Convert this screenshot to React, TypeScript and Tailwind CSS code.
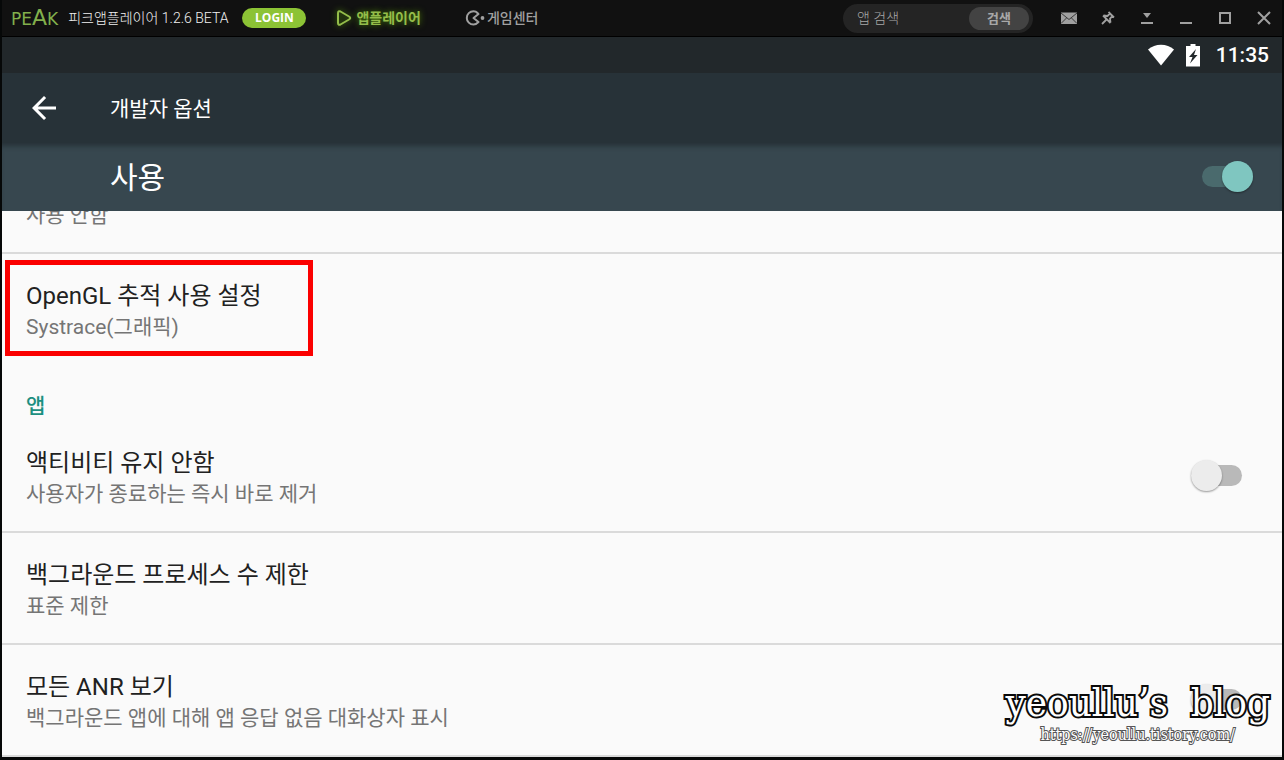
import { useId, useState } from "react";
import type { ReactNode } from "react";

const ANDROID_FONT = "font-['Roboto','Noto_Sans_CJK_KR',sans-serif]";

/** Material switch. Thumb is the ::after, track is the ::before. */
function Switch({ id, label, defaultOn = false }: { id: string; label?: string; defaultOn?: boolean }) {
  const [on, setOn] = useState(defaultOn);
  return (
    <input
      id={id}
      type="checkbox"
      role="switch"
      aria-label={label}
      checked={on}
      onChange={(e) => setOn(e.target.checked)}
      className="relative h-8 w-[51px] shrink-0 cursor-pointer appearance-none before:absolute before:inset-x-0 before:top-[5px] before:h-[21px] before:rounded-full before:bg-[#b9b9b9] after:absolute after:left-0 after:top-0 after:size-[31px] after:rounded-full after:bg-[#ececec] after:shadow-[0_1px_2px_rgba(0,0,0,0.4)] checked:before:bg-[#4a6a6d] checked:after:left-5 checked:after:bg-[#7fc6c0]"
    />
  );
}

interface PreferenceProps {
  title?: string;
  summary: string;
  toggle?: boolean;
  divider?: boolean;
  highlighted?: boolean;
}

function Preference({ title, summary, toggle = false, divider = true, highlighted = false }: PreferenceProps) {
  const id = useId();
  return (
    <li
      className={
        divider
          ? "relative flex shrink-0 items-center justify-between border-b-2 border-[#dadada] pl-6 pr-10"
          : "relative flex shrink-0 items-center justify-between pl-6 pr-10"
      }
    >
      <label htmlFor={toggle ? id : undefined} className="block pb-[22px] pt-[26px]">
        {title ? <span className="block text-[24px] leading-[32px] text-[#212121]">{title}</span> : null}
        <span className="block text-[21px] leading-[30px] text-[#757575]">{summary}</span>
      </label>
      {toggle ? <Switch id={id} /> : null}
      {highlighted ? (
        <span aria-hidden className="pointer-events-none absolute left-[3px] top-[6px] h-24 w-[308px] border-[5px] border-[#fb0000]" />
      ) : null}
    </li>
  );
}

function WindowButton({ label, children }: { label: string; children: ReactNode }) {
  return (
    <button type="button" aria-label={label} className="flex h-9 w-9 items-center justify-center text-[#a0a0a0] hover:text-white">
      <svg width="16" height="16" viewBox="0 0 16 16" fill="none" stroke="currentColor" strokeWidth="2" aria-hidden>
        {children}
      </svg>
    </button>
  );
}

function TitleBar() {
  return (
    <header className="flex h-[37px] shrink-0 items-center justify-between border-b border-black bg-[#111111] font-['Roboto','Noto_Sans_CJK_KR',sans-serif]">
      <div className="flex items-center pl-[9px]">
        <span className="flex items-baseline font-['DejaVu_Sans',sans-serif] text-[17px] leading-[20px] text-[#82b04c]">
          PE<span className="text-[22px]">A</span>K
        </span>
        <span className="ml-[10px] whitespace-nowrap text-[14px] font-light text-[#f2f2f2]">피크앱플레이어 1.2.6 BETA</span>
        <button type="button" className="ml-[14px] h-5 w-16 rounded-full bg-[#8cc335] text-center font-['Open_Sans',sans-serif] text-[12px] font-bold leading-[20px] text-white">
          LOGIN
        </button>
        <nav aria-label="메뉴" className="ml-[30px] flex items-center gap-11 text-[14px]">
          <a href="#player" aria-current="page" className="flex items-center gap-1 font-bold text-[#94bd4a] [text-shadow:0_0_6px_#4f8a08]">
            <svg width="16" height="18" viewBox="0 0 16 18" fill="none" stroke="currentColor" strokeWidth="2" strokeLinejoin="round" className="drop-shadow-[0_0_3px_#4f8a08]" aria-hidden>
              <path d="M2 4.200Q2 1.500 4.500 2.500L13 7.500Q15.500 9 13 10.500L4.500 15.500Q2 16.500 2 14Z" />
            </svg>
            앱플레이어
          </a>
          <a href="#games" className="flex items-center gap-[2px] font-medium text-[#a0a0a0]">
            <svg width="20" height="18" viewBox="0 0 20 18" fill="none" stroke="currentColor" strokeWidth="2" strokeLinejoin="round" strokeLinecap="round" aria-hidden>
              <path d="M12.500 4Q11 2.200 8.500 2.200A6.700 6.700 0 1 0 8.500 15.600Q11 15.600 13.500 13L8.500 9L13.500 5Z" />
              <circle cx="17.500" cy="9" r="1.900" fill="currentColor" stroke="none" />
            </svg>
            게임센터
          </a>
        </nav>
      </div>

      <div className="flex items-center gap-[18px]">
        <form role="search" onSubmit={(e) => e.preventDefault()} className="flex h-[29px] w-[190px] items-center rounded-full bg-[#242424] pl-[14px] pr-1">
          <input
            type="search"
            aria-label="앱 검색"
            placeholder="앱 검색"
            className="min-w-0 flex-1 bg-transparent text-[14px] font-light text-[#b4b4b4] outline-none placeholder:text-[#a8a8a8]"
          />
          <button type="submit" className="h-[23px] w-[60px] rounded-full bg-[#434343] text-[13px] font-bold leading-[23px] text-[#a8a8a8]">
            검색
          </button>
        </form>
        <div className="flex gap-[3px]">
          <WindowButton label="메시지">
            <path d="M0 2.500H16V14H0Z" fill="currentColor" stroke="none" />
            <path d="M0 3L8 9.500L16 3M0 13.500L5.500 8M16 13.500L10.500 8" stroke="#3a3a3a" strokeWidth="1" />
          </WindowButton>
          <WindowButton label="항상 위">
            <path d="M8.500 2L14 7.500M10 3.500L7.500 6L3.500 5.500M3 5.500L10.500 13M10.500 12.500L10 8.500L12.500 6" strokeWidth="1.800" />
            <path d="M6.500 9.500L2 14" strokeWidth="1.800" />
          </WindowButton>
          <WindowButton label="숨기기">
            <path d="M4 3H12L8 8Z" fill="currentColor" stroke="none" />
            <path d="M2 13H14" />
          </WindowButton>
          <WindowButton label="최소화">
            <path d="M2 13H14" />
          </WindowButton>
          <WindowButton label="최대화">
            <path d="M3 3H13V13H3Z" />
          </WindowButton>
          <WindowButton label="닫기">
            <path d="M2 2L14 14M14 2L2 14" />
          </WindowButton>
        </div>
      </div>
    </header>
  );
}

function StatusBar() {
  return (
    <div className="flex h-9 shrink-0 items-center justify-end bg-[#22282b] pr-[13px] text-white">
      <svg width="26" height="22" viewBox="0 0 26 22" fill="currentColor" aria-hidden>
        <path d="M13 21.500L0 5.500C7 -.8 19 -.8 26 5.500Z" />
      </svg>
      <svg width="14" height="23" viewBox="0 0 14 23" className="ml-3" aria-hidden>
        <path d="M4.500 0H9.500V2H14V22.500H0V2H4.500Z" fill="currentColor" />
        <path d="M10 5L3 13H6.500L4 19.500L11.500 11H8Z" fill="#22282b" />
      </svg>
      <time className="ml-4 text-[21px] font-medium leading-[36px]">11:35</time>
    </div>
  );
}

export default function App() {
  const masterId = useId();
  return (
    <div className="flex h-screen flex-col overflow-hidden border-x-2 border-b-[3px] border-[#060808] bg-[#fafafa]">
      <TitleBar />
      <div className={`relative flex min-h-0 flex-1 flex-col ${ANDROID_FONT}`}>
        <StatusBar />
        <div className="flex h-[70px] shrink-0 items-center gap-12 bg-[#273238] pl-6 text-white">
          <button type="button" aria-label="뒤로">
            <svg width="36" height="36" viewBox="0 0 24 24" fill="currentColor" aria-hidden>
              <path d="M20 11H7.830l5.590-5.590L12 4l-8 8 8 8 1.410-1.410L7.830 13H20v-2z" />
            </svg>
          </button>
          <h1 className="pt-[2px] text-[21px] leading-[30px]">개발자 옵션</h1>
        </div>
        <div className="flex h-[68px] shrink-0 items-center justify-between bg-[#37474f] pl-[108px] pr-[29px] text-white shadow-[inset_0_6px_5px_-3px_#273238]">
          <label htmlFor={masterId} className="pt-[2px] text-[30px] leading-[44px]">사용</label>
          <Switch id={masterId} defaultOn />
        </div>

        <main className="min-h-0 flex-1 overflow-hidden">
          {/* scrolled-off row, only its tail is visible */}
          <ul className="flex h-[43px] flex-col justify-end overflow-hidden">
            <Preference summary="사용 안함" />
          </ul>
          <ul>
            <Preference title="OpenGL 추적 사용 설정" summary="Systrace(그래픽)" divider={false} highlighted />
          </ul>
          <h2 className="pl-6 pt-[27px] text-[21px] font-medium leading-[30px] text-[#1c8f80]">앱</h2>
          <ul>
            <Preference title="액티비티 유지 안함" summary="사용자가 종료하는 즉시 바로 제거" toggle />
            <Preference title="백그라운드 프로세스 수 제한" summary="표준 제한" />
            <Preference title="모든 ANR 보기" summary="백그라운드 앱에 대해 앱 응답 없음 대화상자 표시" toggle />
          </ul>
        </main>

        {/* blog watermark floats over the list */}
        <div className="pointer-events-none absolute bottom-3 right-3 flex flex-col items-center font-['DejaVu_Serif_Condensed','DejaVu_Serif',serif] text-white">
          <p className="whitespace-pre text-[40px] leading-[46px] [-webkit-text-stroke:4px_#0a0a0a] [paint-order:stroke]">yeoullu’s  blog</p>
          <a href="#blog" className="text-[16px] leading-[20px] [-webkit-text-stroke:2px_#555] [paint-order:stroke]">https://yeoullu.tistory.com/</a>
        </div>
      </div>
    </div>
  );
}
